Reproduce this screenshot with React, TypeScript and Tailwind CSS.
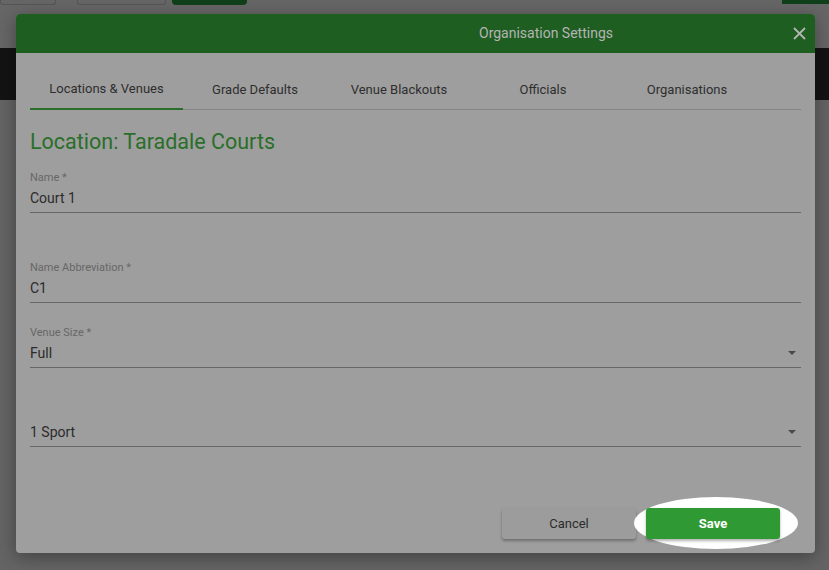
import React from "react";

const tabs = ["Locations & Venues", "Grade Defaults", "Venue Blackouts", "Officials", "Organisations"];

function Field({ label, value, select }: { label?: string; value: string; select?: boolean }) {
  return (
    <div className="flex flex-col">
      <span className="h-[14px] text-[11px] leading-[14px] text-[#676767]">{label}</span>
      <div className="mt-[3px] flex items-center justify-between border-b border-[#666666] pb-[4px]">
        <span className="text-[14px] leading-[20px] text-[#2b2b2b]">{value}</span>
        {select && (
          <svg width="8" height="4" viewBox="0 0 8 4" className="mr-[5px]">
            <path d="M0 0 L8 0 L4 4 Z" fill="#4a4a4a" />
          </svg>
        )}
      </div>
    </div>
  );
}

export default function App() {
  return (
    <div className="relative h-[570px] w-[829px] overflow-hidden bg-[#646464]" style={{ fontFamily: "Roboto, 'Liberation Sans', sans-serif" }}>
      {/* dimmed page behind the dialog */}
      <div className="flex h-[48px] items-start bg-[#666666]">
        <div className="h-[5px] w-[56px] rounded-b-[3px] border border-t-0 border-[#555555]" />
        <div className="ml-[21px] h-[5px] w-[89px] rounded-b-[3px] border border-t-0 border-[#555555]" />
        <div className="ml-[6px] h-[5px] w-[75px] rounded-b-[4px] bg-[#10401a]" />
        <div className="ml-auto h-[4px] w-[47px] bg-[#10401a]" />
      </div>
      <div className="h-[52px] bg-[#131313]" />

      {/* dialog */}
      <div className="absolute left-[16px] top-[14px] flex h-[539px] w-[799px] flex-col overflow-hidden rounded-[4px] bg-[#9e9e9e] shadow-[0_4px_18px_rgba(0,0,0,0.35)]">
        <div className="relative flex h-[39px] shrink-0 items-center bg-[#1e5e20]">
          <span className="absolute left-[463px] text-[14px] text-[#b4b4b4]">Organisation Settings</span>
          <svg className="absolute right-[9px]" width="13" height="13" viewBox="0 0 13 13">
            <path d="M1 1 L12 12 M12 1 L1 12" stroke="#b4b4b4" strokeWidth="1.8" />
          </svg>
        </div>

        <div className="flex flex-1 flex-col px-[14px]">
          <div className="mt-[15px] flex h-[42px] border-b border-[#858585]">
            {tabs.map((t, i) => (
              <div
                key={t}
                className={`flex items-center justify-center pt-[2px] text-[13px] text-[#2e2e2e] ${i === 0 ? "-mb-px w-[153px] border-b-2 border-[#2a6e2a]" : "w-[144px]"}`}
              >
                {t}
              </div>
            ))}
          </div>

          <h2 className="mt-[19px] text-[21.5px] leading-[26px] text-[#2a6e2a]">Location: Taradale Courts</h2>

          <div className="mt-[16px] flex flex-col">
            <Field label="Name *" value="Court 1" />
            <div className="mt-[48px]">
              <Field label="Name Abbreviation *" value="C1" />
            </div>
            <div className="mt-[23px]">
              <Field label="Venue Size *" value="Full" select />
            </div>
            <div className="mt-[37px]">
              <Field value="1 Sport" select />
            </div>
          </div>

          <div className="mt-auto mb-[14px] flex justify-end gap-[10px] pr-[21px]">
            <button className="h-[31px] w-[134px] rounded-[3px] bg-[#9c9c9c] text-[13px] text-[#2b2b2b] shadow-[0_2px_3px_rgba(0,0,0,0.3)]">
              Cancel
            </button>
            <div className="relative">
              <div className="absolute left-[-12px] top-[-11px] h-[52px] w-[164px] rounded-[50%] bg-white" />
              <button className="relative h-[31px] w-[134px] rounded-[3px] bg-[#2f9a33] text-[13px] font-bold text-white shadow-[0_2px_3px_rgba(0,0,0,0.3)]">
                Save
              </button>
            </div>
          </div>
        </div>
      </div>
    </div>
  );
}
